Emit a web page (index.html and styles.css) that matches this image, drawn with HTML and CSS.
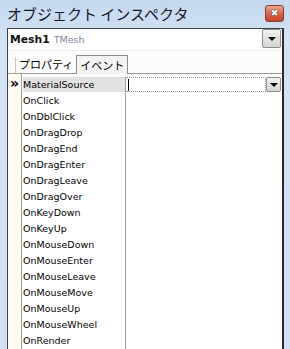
FILE: index.html
```html
<!DOCTYPE html>
<html lang="ja">
<head>
  <meta charset="UTF-8" />
  <title>オブジェクト インスペクタ</title>
  <link rel="stylesheet" href="styles.css">
</head>
<body>
  <div class="window">
    <div class="titlebar">
      <span class="title">オブジェクト インスペクタ</span>
      <span class="close">&#x2716;</span>
    </div>
    <div class="client">
      <div class="combo">
        <span class="obj-name">Mesh1</span>
        <span class="obj-type">TMesh</span>
        <span class="drop"><i class="arrow"></i></span>
      </div>
      <div class="tabs">
        <span class="tab">プロパティ</span>
        <span class="tab active">イベント</span>
      </div>
      <div class="grid" id="grid"></div>
    </div>
  </div>

  <script>
    const events = [
      'MaterialSource', 'OnClick', 'OnDblClick', 'OnDragDrop', 'OnDragEnd',
      'OnDragEnter', 'OnDragLeave', 'OnDragOver', 'OnKeyDown', 'OnKeyUp',
      'OnMouseDown', 'OnMouseEnter', 'OnMouseLeave', 'OnMouseMove',
      'OnMouseUp', 'OnMouseWheel', 'OnRender'
    ];

    function renderGrid() {
      const grid = document.getElementById('grid');
      grid.innerHTML = '';
      events.forEach((name, i) => {
        const sel = i === 0;
        grid.innerHTML += `
          <div class="row ${sel ? 'selected' : ''}">
            <div class="ind">${sel ? '&raquo;' : ''}</div>
            <div class="name">${name}</div>
            <div class="value">${sel ? '<span class="edit"><i class="caret"></i></span><span class="drop small"><i class="arrow"></i></span>' : ''}</div>
          </div>
        `;
      });
    }

    renderGrid();
  </script>
</body>
</html>
```

FILE: styles.css
```css
body {
  margin: 0;
  font-family: "DejaVu Sans", sans-serif;
  font-size: 9.5px;
}
.window {
  width: 290px;
  height: 349px;
  overflow: hidden;
  background: linear-gradient(#c4d8ef, #d4e3f4 40px, #cfe0f3);
  display: flex;
  flex-direction: column;
}
.titlebar {
  height: 28px;
  flex: none;
  display: flex;
  align-items: center;
  padding-left: 7px;
  padding-right: 6px;
}
.title {
  font-family: "Noto Sans CJK JP", sans-serif;
  font-size: 15px;
  color: #101828;
  flex: 1;
  margin-top: -1px;
}
.close {
  width: 19px;
  height: 17px;
  margin-top: -1px;
  border: 1px solid #8a3b2c;
  border-radius: 3px;
  background: linear-gradient(#eaa593, #d6684f 50%, #c0442b);
  color: #fff;
  font-size: 9px;
  line-height: 15px;
  text-align: center;
  box-sizing: border-box;
  text-shadow: 0 0 1px #333, 0 0 1px #333;
}
.client {
  flex: 1;
  margin: 0 6px 0 7px;
  border: 1px solid #38444f;
  border-right: 2px solid #262b30;
  border-bottom: none;
  background: #fcfcfc;
  display: flex;
  flex-direction: column;
}
.combo {
  height: 21px;
  flex: none;
  display: flex;
  align-items: center;
  padding-left: 2px;
  background: #fff;
  border-bottom: 1px solid #eeeeee;
}
.obj-name {
  font-weight: bold;
  font-size: 10.8px;
  color: #111;
  margin-right: 4px;
}
.obj-type {
  color: #7d8a9c;
  flex: 1;
}
.drop {
  width: 19px;
  height: 19px;
  margin-right: 1px;
  align-self: flex-start;
  box-sizing: border-box;
  border: 1px solid #8e8f8f;
  border-radius: 2px;
  background: linear-gradient(#f4f4f4, #e2e2e2 50%, #d6d6d6);
  display: flex;
  align-items: center;
  justify-content: center;
}
.drop.small {
  width: 15px;
  height: 15px;
  margin-right: 1px;
}
.arrow {
  width: 0;
  height: 0;
  border-left: 4px solid transparent;
  border-right: 4px solid transparent;
  border-top: 4px solid #000;
  margin-top: 1px;
}
.tabs {
  height: 22px;
  flex: none;
  display: flex;
  align-items: flex-end;
  padding-left: 7px;
  border-bottom: 1px solid #9a9a9a;
  font-family: "Noto Sans CJK JP", sans-serif;
  font-size: 11px;
  color: #000;
}
.tab {
  height: 16px;
  line-height: 15px;
  padding: 0 3px;
  border-left: 1px solid #c8c8c8;
}
.tab.active {
  height: 18px;
  line-height: 18px;
  margin-bottom: -1px;
  background: #f4f4f4;
  border: 1px solid #8c8c8c;
  border-bottom: none;
}
.grid {
  flex: 1;
  padding-top: 3px;
  background: linear-gradient(90deg, #fffbf0 13px, #a0a0a0 13px, #a0a0a0 14px, #fff 14px);
}
.row {
  height: 16px;
  display: flex;
}
.ind {
  width: 14px;
  flex: none;
  font-weight: bold;
  font-size: 14px;
  line-height: 13px;
  text-align: center;
  padding-right: 1px;
  box-sizing: border-box;
}
.name {
  width: 104px;
  flex: none;
  height: 16px;
  line-height: 15px;
  padding-left: 1px;
  box-sizing: border-box;
  border-right: 1px solid #a0a0a0;
  color: #000;
}
.selected .name {
  background: #e2e2e2;
  background-clip: content-box;
  padding-bottom: 1px;
}
.value {
  flex: 1;
  display: flex;
  height: 15px;
}
.edit {
  flex: 1;
  border: 1px dotted #9a9a9a;
  border-left: none;
  background: #fff;
  box-sizing: border-box;
  padding-left: 2px;
}
.caret {
  display: block;
  width: 1px;
  height: 12px;
  margin-top: 1px;
  background: #000;
}
```
